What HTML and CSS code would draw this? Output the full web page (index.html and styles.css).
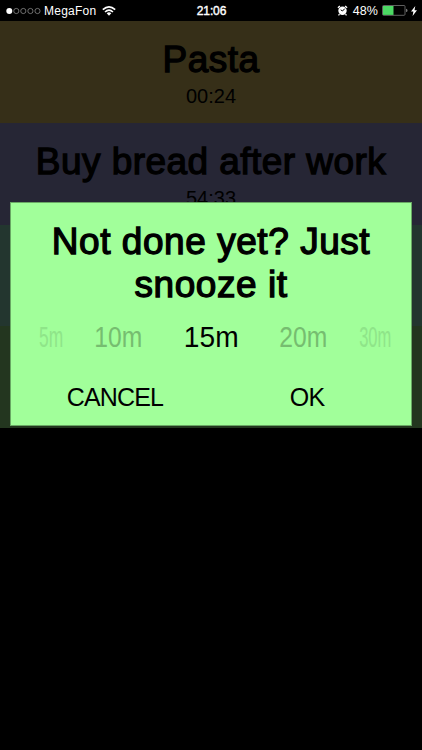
FILE: index.html
```html
<!DOCTYPE html>
<html lang="en">
<head>
<meta charset="utf-8">
<title>Reminders</title>
<link rel="stylesheet" href="styles.css">
</head>
<body>
<main class="screen">
  <header class="status">
    <div class="status-left">
      <svg class="signal" width="36" height="8" viewBox="0 0 36 8"><circle cx="3.3" cy="4" r="3" fill="#fff"/><g fill="none" stroke="#999" stroke-width=".7"><circle cx="10.3" cy="4" r="2.6"/><circle cx="17.3" cy="4" r="2.6"/><circle cx="24.4" cy="4" r="2.6"/><circle cx="31.5" cy="4" r="2.6"/></g></svg>
      <span class="carrier">MegaFon</span>
      <svg class="wifi" width="14" height="10" viewBox="0 0 14 10"><g fill="none" stroke="#fff" stroke-width="1.6"><path d="M.8 3.7Q7-2 13.200 3.700"/><path d="M3 6Q7 2.300 11 6"/></g><path d="M4.700 7.300Q7 5.400 9.300 7.300L7 9.700Z" fill="#fff"/></svg>
    </div>
    <time class="clock">21:06</time>
    <div class="status-right">
      <svg class="alarm" width="11" height="11" viewBox="0 0 11 11"><circle cx="5.500" cy="5.700" r="4.200" fill="#fff"/><path d="M.9 2.700 2.900.9M8.100.9l2 1.800M2.500 9.200l-1 1.200M8.500 9.200l1 1.200" stroke="#fff" stroke-width="1.300"/><path d="M5.500 6 7.800 3.600M5.500 6 3.700 4.800" stroke="#000" stroke-width="1" fill="none"/></svg>
      <span class="percent">48%</span>
      <svg class="battery" width="26" height="11" viewBox="0 0 26 11"><rect x=".5" y=".5" width="22.500" height="9.800" rx="1" fill="none" stroke="#777" stroke-width=".8"/><rect x="1" y="1" width="10.500" height="8.900" fill="#4cd964"/><path d="M24 3.700q1.500 0 1.500 1.700T24 7.100Z" fill="#777"/></svg>
      <svg class="bolt" width="6" height="10" viewBox="0 0 6 10"><path d="M4.300 0 0 5.600h2.400L1.600 10 6 4.200H3.500Z" fill="#fff"/></svg>
    </div>
  </header>
  <section class="list">
    <article class="row olive"><h2>Pasta</h2><p>00:24</p></article>
    <article class="row navy"><h2>Buy bread after work</h2><p>54:33</p></article>
    <article class="row teal"></article>
    <article class="row green"></article>
  </section>
  <section class="dialog" role="dialog">
    <h1><span class="line">Not done yet? Just</span> <span class="line second">snooze it</span></h1>
    <div class="picker">
      <span class="far">5m</span>
      <span class="near">10m</span>
      <span class="current">15m</span>
      <span class="near">20m</span>
      <span class="far">30m</span>
    </div>
    <div class="actions"><button class="cancel">CANCEL</button><button>OK</button></div>
  </section>
</main>
</body>
</html>
```
FILE: styles.css
```css
* { box-sizing: border-box; }
body { margin: 0; background: #000; color: #000; font-family: "Liberation Sans", Arial, sans-serif; }
h1, h2, p { margin: 0; font-weight: 400; }
.screen { position: relative; width: 422px; height: 750px; overflow: hidden; background: #000; }
.status { height: 21px; display: grid; grid-template-columns: 1fr auto 1fr; align-items: center; padding: 0 5px 0 6px; color: #fff; font-size: 12px; line-height: 20px; }
.status svg { display: block; flex: none; }
.status-left, .status-right { display: flex; align-items: center; }
.status-right { justify-content: flex-end; }
.carrier { margin-left: 2px; font-size: 12px; letter-spacing: .25px; }
.wifi { margin-left: 6px; }
.clock { font-size: 12px; letter-spacing: -.1px; -webkit-text-stroke: .4px #fff; }
.percent { margin: 0 4px 0 5px; font-size: 12.5px; letter-spacing: .1px; }
.bolt { margin-left: 3px; }
.row { height: 101.75px; padding-top: 17px; text-align: center; }
.row h2 { font-size: 37px; line-height: 44px; letter-spacing: .45px; white-space: nowrap; -webkit-text-stroke: 1.3px #000; }
.row p { font-size: 20px; line-height: 28px; }
.olive { background: #362f18; }
.navy { background: #262635; }
.teal { background: #23362f; }
.green { background: #23361f; }
.dialog { position: absolute; left: 10px; top: 202px; width: 402px; height: 224px; padding-top: 17px; background: #a1ff9a; border: 1px solid #69a864; }
.dialog h1 { font-size: 37px; line-height: 43px; text-align: center; letter-spacing: .55px; -webkit-text-stroke: 1.3px #000; }
.line { display: block; }
.picker { display: grid; grid-template-columns: 80px 55px 130px 55px 80px; margin-top: 11px; height: 40px; align-items: center; justify-items: center; font-size: 29px; }
.current { transform: scaleX(.97); }
.near { color: #76bd70; transform: scaleX(.85); }
.far { color: #8fe589; transform: scaleX(.6); }
.far:first-child { transform: scaleX(.6); }
.far:last-child { transform: translateX(4px) scaleX(.57); }
.actions { display: grid; grid-template-columns: 208px 176px; margin-top: 21px; }
.actions button { border: 0; padding: 0; background: none; font: 25px/38px "Liberation Sans", Arial, sans-serif; letter-spacing: -.85px; color: #000; }
```
